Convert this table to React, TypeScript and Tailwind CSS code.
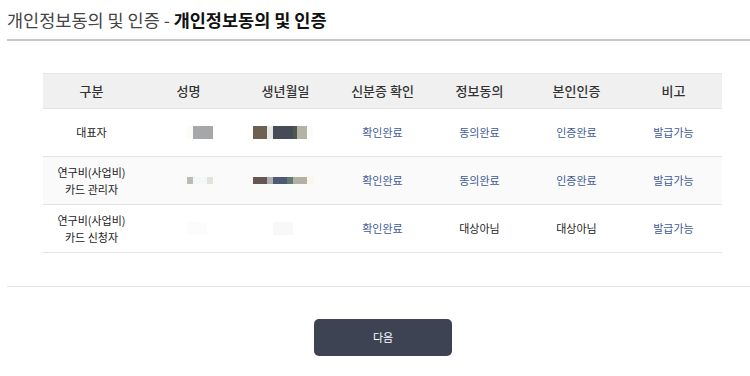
const font = { fontFamily: '"Noto Sans CJK KR", "Noto Sans", sans-serif' };

type Block = { w: number; c: string };

const rows: {
  role: string[];
  name: Block[];
  nameH: number;
  birth: Block[];
  id: string;
  agree: { text: string; link: boolean };
  auth: { text: string; link: boolean };
  note: string;
  striped?: boolean;
}[] = [
  {
    role: ["대표자"],
    name: [
      { w: 6, c: "#fcfbf6" },
      { w: 20, c: "#a6a7a8" },
    ],
    nameH: 13,
    birth: [
      { w: 14, c: "#6f6152" },
      { w: 6, c: "#e8e9e4" },
      { w: 20, c: "#454c58" },
      { w: 4, c: "#4e574f" },
      { w: 10, c: "#b3b3a5" },
      { w: 6, c: "#fbfcfa" },
    ],
    id: "확인완료",
    agree: { text: "동의완료", link: true },
    auth: { text: "인증완료", link: true },
    note: "발급가능",
  },
  {
    role: ["연구비(사업비)", "카드 관리자"],
    name: [
      { w: 6, c: "#bdbab5" },
      { w: 14, c: "#f4f8f8" },
      { w: 6, c: "#e2e2dc" },
    ],
    nameH: 7,
    birth: [
      { w: 14, c: "#655751" },
      { w: 6, c: "#afafaf" },
      { w: 14, c: "#4e5a75" },
      { w: 6, c: "#607b74" },
      { w: 14, c: "#b3b1a3" },
      { w: 6, c: "#fdf4e5" },
    ],
    id: "확인완료",
    agree: { text: "동의완료", link: true },
    auth: { text: "인증완료", link: true },
    note: "발급가능",
    striped: true,
  },
  {
    role: ["연구비(사업비)", "카드 신청자"],
    name: [{ w: 20, c: "#fcfcfc" }],
    nameH: 13,
    birth: [
      { w: 20, c: "#ffffff" },
      { w: 20, c: "#f8f8f8" },
      { w: 16, c: "#ffffff" },
    ],
    id: "확인완료",
    agree: { text: "대상아님", link: false },
    auth: { text: "대상아님", link: false },
    note: "발급가능",
  },
];

const headers = ["구분", "성명", "생년월일", "신분증 확인", "정보동의", "본인인증", "비고"];

const Mosaic = ({ blocks, h }: { blocks: Block[]; h: number }) => (
  <div className="flex">
    {blocks.map((b, i) => (
      <div key={i} style={{ width: b.w, height: h, background: b.c }} />
    ))}
  </div>
);

const Cell = ({ text, link }: { text: string; link: boolean }) => (
  <div className={`flex items-center justify-center text-[11px] ${link ? "text-[#3f5a97]" : "text-[#222]"}`}>
    {text}
  </div>
);

export default function App() {
  return (
    <div className="w-[750px] h-[376px] bg-white overflow-hidden" style={font}>
      {/* title */}
      <div className="ml-[7px] pt-[9px] pb-[8px] border-b-2 border-[#c9c9c9] text-[17.5px] leading-[22px] text-[#444]">
        개인정보동의 및 인증 - <span className="font-bold text-[#111]">개인정보동의 및 인증</span>
      </div>

      {/* table */}
      <div className="ml-[43px] mt-[32px] w-[679px] border-b border-[#e3e3e3]">
        <div className="grid grid-cols-7 h-[35px] bg-[#f0f0f0] border-t border-[#e6e6e6]">
          {headers.map((h) => (
            <div key={h} className="flex items-center justify-center text-[13px] text-[#333] font-medium">
              {h}
            </div>
          ))}
        </div>
        {rows.map((r, i) => (
          <div
            key={i}
            className={`grid grid-cols-7 h-[48px] border-t border-[#e3e3e3] ${r.striped ? "bg-[#fafafa]" : "bg-white"}`}
          >
            <div className="flex flex-col items-center justify-center text-[11px] leading-[17px] text-[#222]">
              {r.role.map((t) => (
                <span key={t}>{t}</span>
              ))}
            </div>
            <div className="flex items-center pl-[47px]">
              <Mosaic blocks={r.name} h={r.nameH} />
            </div>
            <div className="flex items-center pl-[16px]">
              <Mosaic blocks={r.birth} h={r.nameH} />
            </div>
            <Cell text={r.id} link />
            <Cell text={r.agree.text} link={r.agree.link} />
            <Cell text={r.auth.text} link={r.auth.link} />
            <Cell text={r.note} link />
          </div>
        ))}
      </div>

      {/* footer */}
      <div className="ml-[7px] mt-[33px] border-t border-[#e6e6e6] pt-[32px] pl-[9px] flex justify-center">
        <button className="w-[138px] h-[37px] rounded-[5px] bg-[#3e4354] text-white text-[11px]">
          다음
        </button>
      </div>
    </div>
  );
}
